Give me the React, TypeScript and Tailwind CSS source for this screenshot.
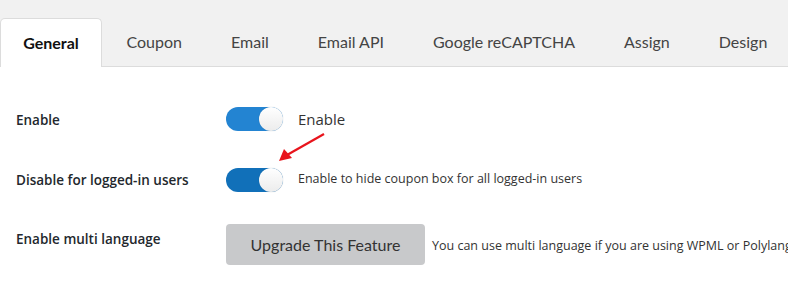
import React from 'react';

const tabs = ['General', 'Coupon', 'Email', 'Email API', 'Google reCAPTCHA', 'Assign', 'Design'];

const Toggle: React.FC<{ color: string }> = ({ color }) => (
    <div className={`relative shrink-0 w-[57px] h-[24px] rounded-full ${color}`}>
        <div className="absolute right-0 top-0 w-[24px] h-[24px] rounded-full bg-gradient-to-b from-white to-[#ececec] shadow-[0_0_1px_rgba(0,0,0,0.25)]" />
    </div>
);

export default function App() {
    return (
        <div className="w-[788px] h-[293px] bg-white overflow-hidden font-['Open_Sans',sans-serif] text-[#23282d]">
            {/* Tabs */}
            <div className="bg-[#f1f1f1] h-[67px] pt-[18px] flex border-b border-[#dcdcdc] font-['Lato',sans-serif] text-[16px] whitespace-nowrap">
                {tabs.map((t, i) => (
                    <div
                        key={t}
                        className={
                            i === 0
                                ? 'shrink-0 h-[49px] w-[102px] flex items-center justify-center bg-white border border-b-0 border-[#dcdcdc] rounded-t-[5px] -mb-px text-[#111] font-bold'
                                : 'shrink-0 h-[48px] px-[24.5px] flex items-center text-[#444]'
                        }
                    >
                        {t}
                    </div>
                ))}
            </div>

            {/* Rows */}
            <div className="px-4 text-[13px]">
                <div className="flex items-center h-[24px] mt-[40px]">
                    <div className="w-[210px] shrink-0 font-semibold text-[13.5px] mt-[2px]">Enable</div>
                    <Toggle color="bg-[#2384d2]" />
                    <span className="ml-[15px] text-[15px] text-[#333]">Enable</span>
                </div>

                <div className="relative flex items-center h-[25px] mt-[36px]">
                    <div className="w-[210px] shrink-0 font-semibold text-[13.5px] mt-[2px]">Disable for logged-in users</div>
                    <Toggle color="bg-[#1170b9]" />
                    <span className="ml-[15px] text-[12.5px] text-[#333]">Enable to hide coupon box for all logged-in users</span>
                    <svg className="absolute left-[255px] top-[-34px]" width="60" height="34" viewBox="0 0 60 34">
                        <line x1="53" y1="1" x2="16" y2="22" stroke="#e8141c" strokeWidth="2.2" />
                        <polygon points="8,28 13,16 21,25" fill="#e8141c" />
                    </svg>
                </div>

                <div className="flex items-center mt-[32px]">
                    <div className="w-[210px] shrink-0 font-semibold text-[13.5px] self-start mt-[5px]">Enable multi language</div>
                    <div className="shrink-0 w-[199px] h-[41px] rounded-[4px] bg-[#c8c9cb] flex items-center justify-center font-['Lato',sans-serif] text-[16px] text-[#333]">
                        Upgrade This Feature
                    </div>
                    <span className="ml-[7px] mt-[4px] whitespace-nowrap text-[12.5px] text-[#333]">You can use multi language if you are using WPML or Polylang</span>
                </div>
            </div>
        </div>
    );
}
